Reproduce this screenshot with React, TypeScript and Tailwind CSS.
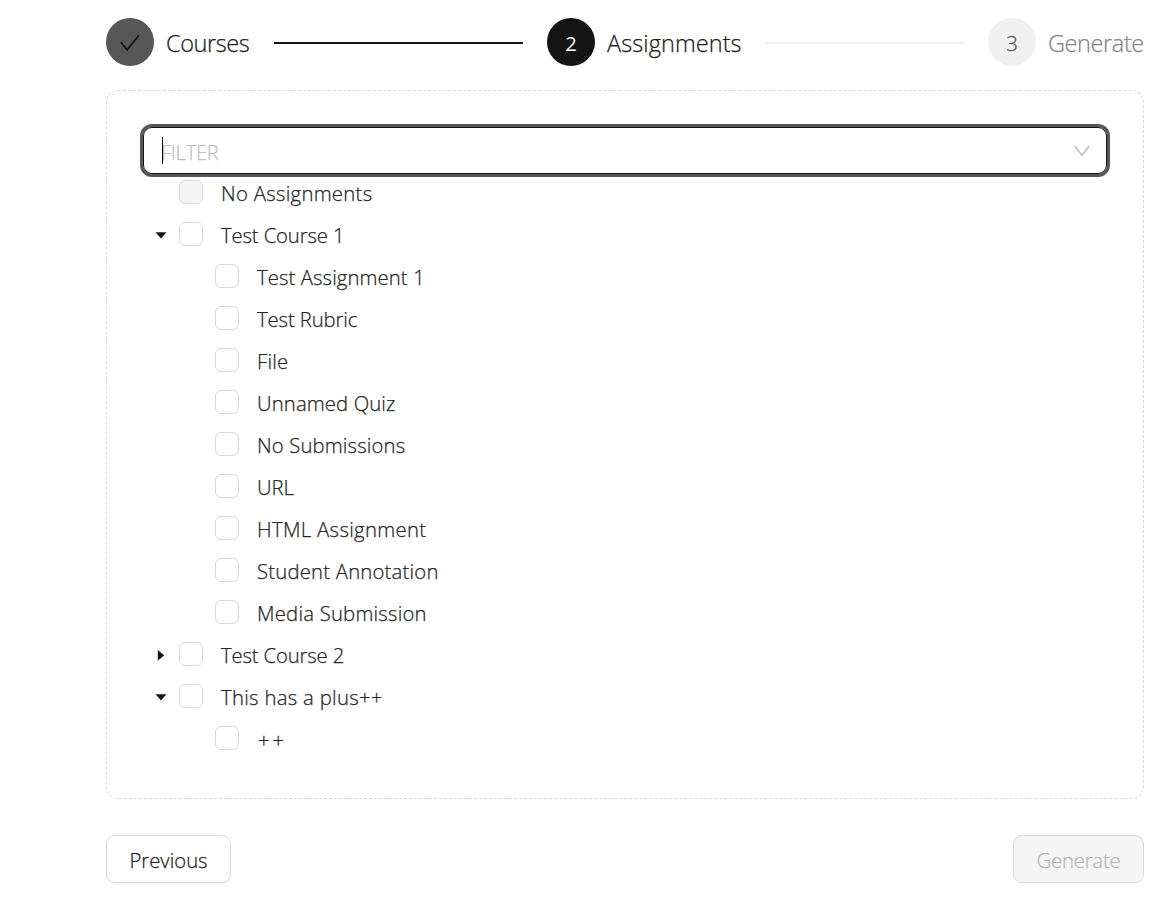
import React from "react";

type Row = {
  label: string;
  spacing: string;
  child?: boolean;
  disabled?: boolean;
  open?: boolean;
  hasChildren?: boolean;
};

const rows: Row[] = [
  { label: "No Assignments", spacing: "tracking-[0.3px]", disabled: true },
  { label: "Test Course 1", spacing: "tracking-[-0.13px]", hasChildren: true, open: true },
  { label: "Test Assignment 1", spacing: "tracking-[0.1px]", child: true },
  { label: "Test Rubric", spacing: "tracking-[-0.1px]", child: true },
  { label: "File", spacing: "tracking-[0.2px]", child: true },
  { label: "Unnamed Quiz", spacing: "tracking-[0.12px]", child: true },
  { label: "No Submissions", spacing: "tracking-[0.15px]", child: true },
  { label: "URL", spacing: "tracking-[-0.1px]", child: true },
  { label: "HTML Assignment", spacing: "tracking-[0.34px]", child: true },
  { label: "Student Annotation", spacing: "tracking-[0.21px]", child: true },
  { label: "Media Submission", spacing: "tracking-[0.22px]", child: true },
  { label: "Test Course 2", spacing: "tracking-[-0.15px]", hasChildren: true },
  { label: "This has a plus++", spacing: "tracking-[0.3px]", hasChildren: true, open: true },
  { label: "++", spacing: "tracking-[2.8px] pl-px translate-y-px", child: true },
];

function Caret({ open }: { open?: boolean }) {
  return (
    <svg width="12" height="12" viewBox="0 0 12 12" fill="#141414" aria-hidden="true">
      {open ? <path d="M.5 3.3h11L6 9.5z" /> : <path d="M2.8 1v10.7L9.2 6.3z" />}
    </svg>
  );
}

function TreeRow({ row }: { row: Row }) {
  return (
    <li className={`mb-1.5 flex h-9 items-center ${row.child ? "pl-9" : ""}`}>
      <span className="flex w-9 justify-center pt-0.5 pr-px">{row.hasChildren && <Caret open={row.open} />}</span>
      <span
        className={`size-6 shrink-0 rounded-md border border-[#d9d9d9] ${row.disabled ? "bg-[#f5f5f5]" : "bg-white"}`}
      />
      <span className={`ml-[18px] pt-0.5 text-[20.3px] leading-9 whitespace-nowrap text-[#262626] ${row.spacing}`}>
        {row.label}
      </span>
    </li>
  );
}

export default function App() {
  return (
    <main className="h-[913px] w-[1166px] overflow-hidden bg-white pt-[18px] pr-[22px] pl-[106px] font-['Open_Sans',sans-serif] font-light text-[#1c1c1c] [-webkit-text-stroke:0.25px_currentColor]">
      <ol className="flex h-12 items-center">
        <li className="flex w-[441px] shrink-0 items-center">
          <span className="flex size-12 shrink-0 items-center justify-center rounded-full bg-[#575757]">
            <svg width="20" height="18" viewBox="0 0 20 18" fill="none" stroke="#141414" strokeWidth="1.8" className="mt-0.5 -ml-px">
              <path d="M.8 8.2 7.2 15.8 18.8 1.5" />
            </svg>
          </span>
          <span className="ml-3 w-[84px] pt-px text-[23.5px] leading-8 tracking-[-0.4px] whitespace-nowrap">Courses</span>
          <span className="mt-0.5 ml-6 h-0.5 w-[249px] bg-[#141414]" />
        </li>
        <li className="flex w-[441px] shrink-0 items-center">
          <span className="flex size-12 shrink-0 items-center justify-center rounded-full bg-[#141414] pt-0.5 text-[20.3px] font-normal text-white [-webkit-text-stroke:0]">
            2
          </span>
          <span className="ml-3 w-[134px] pt-px text-[23.5px] leading-8 tracking-[0.08px] whitespace-nowrap">Assignments</span>
          <span className="mt-0.5 ml-6 h-0.5 w-[199px] bg-[#f0f0f0]" />
        </li>
        <li className="flex shrink-0 items-center">
          <span className="flex size-12 shrink-0 items-center justify-center rounded-full bg-[#f0f0f0] pt-0.5 text-[20.3px] text-[#4d4d4d]">
            3
          </span>
          <span className="ml-3 pt-px text-[23.5px] leading-8 tracking-[-0.4px] whitespace-nowrap text-[#858585]">Generate</span>
        </li>
      </ol>

      <section className="mt-6 h-[709px] rounded-xl border border-dashed border-[#d9d9d9] px-9 pt-9">
        <div className="flex h-[47px] items-center justify-between rounded-[9px] border border-[#141414] pr-[15px] pl-[18px] shadow-[0_0_0_3px_#575757]">
          <span className="flex items-center">
            <span className="z-10 h-[27px] w-px bg-black" />
            <span className="-ml-0.5 pt-[3px] text-[20.3px] leading-8 tracking-[-0.35px] text-[#bfbfbf]">FILTER</span>
          </span>
          <svg width="18" height="18" viewBox="0 0 18 18" fill="none" stroke="#bfbfbf" strokeWidth="1.6">
            <path d="M1.7 4 9 13.2 16.3 4" />
          </svg>
        </div>
        <ul>
          {rows.map((row) => (
            <TreeRow key={row.label} row={row} />
          ))}
        </ul>
      </section>

      <div className="mt-9 flex justify-between text-[20.3px]">
        <button className="h-12 w-[125px] rounded-[9px] border border-[#d9d9d9] bg-white pt-0.5 shadow-[0_3px_0_rgba(0,0,0,0.02)]">
          Previous
        </button>
        <button className="h-12 w-[131px] rounded-[9px] border border-[#d9d9d9] bg-[#f5f5f5] pt-0.5 tracking-[-0.2px] text-[#b5b5b5]" disabled>
          Generate
        </button>
      </div>
    </main>
  );
}
